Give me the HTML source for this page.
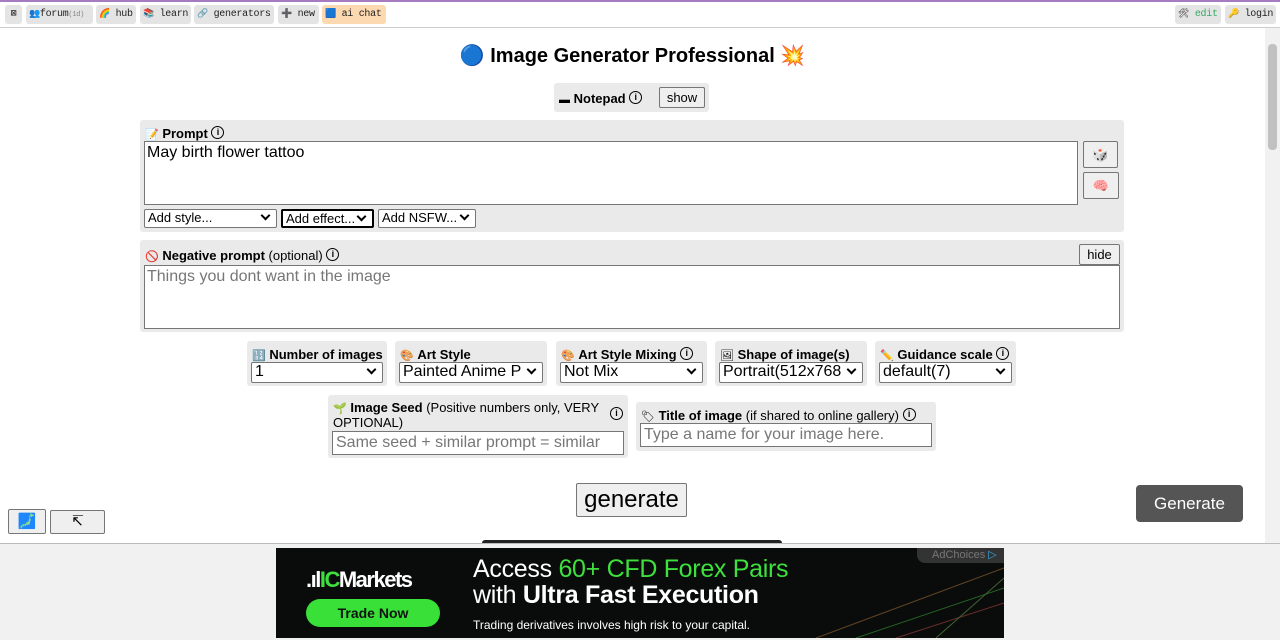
<!DOCTYPE html>
<html><head><meta charset="utf-8"><style>
*{box-sizing:border-box;margin:0;padding:0}
body{width:1280px;height:640px;overflow:hidden;background:#fff;font-family:"Liberation Sans",Arial,sans-serif;font-size:13px;color:#000;position:relative}
.a{position:absolute}
.top{left:0;top:0;width:1280px;height:28px;border-top:2px solid #a77bc0;border-bottom:1px solid #ccc;background:#fff}
.tb{position:absolute;top:3px;height:19px;background:#e4e4e4;border-radius:3px;font-family:"Liberation Mono",monospace;font-size:10px;line-height:19px;padding:0 3px;color:#222;white-space:nowrap;overflow:hidden;letter-spacing:-0.3px}
.tb i{font-style:normal;font-size:9px}
.box{position:absolute;background:#eaeaea;border-radius:3px}
b{font-weight:bold}
.sel{position:absolute;background:#fff;border:1px solid #767676;border-radius:2px;font-size:16px;line-height:18px;padding-left:3px;white-space:nowrap;overflow:hidden}
.sel:after{content:"";position:absolute;right:7px;top:3px;width:5px;height:5px;border-right:2px solid #000;border-bottom:2px solid #000;transform:rotate(45deg)}
.ssel{font-size:13px;line-height:16px}
.ssel:after{top:2px}
.lab{position:absolute;font-size:13px;white-space:nowrap;line-height:15px}
.btn{position:absolute;background:#efefef;border:1px solid #767676;border-radius:2px;text-align:center}
.i{display:inline-block;width:13px;height:13px;border:1.5px solid #000;border-radius:50%;font-size:9px;line-height:10px;text-align:center;font-weight:bold;vertical-align:text-top;font-style:normal}
.em{font-size:11px}
</style></head><body>
<div class="a top">
<div class="tb" style="left:5px;width:17px;padding:0;text-align:center">⊠</div>
<div class="tb" style="left:26px;width:67px"><i>👥</i>forum<span style="font-size:7px;color:#888">(1d)</span></div>
<div class="tb" style="left:96px;width:40px"><i>🌈</i> hub</div>
<div class="tb" style="left:140px;width:51px"><i>📚</i> learn</div>
<div class="tb" style="left:194px;width:80px"><i>🔗</i> generators</div>
<div class="tb" style="left:278px;width:41px"><i>➕</i> new</div>
<div class="tb" style="left:322px;width:64px;background:#fcd9b0"><i>🟦</i> ai chat</div>
<div class="tb" style="left:1175px;width:46px"><i>🛠</i> <span style="color:#3a6">edit</span></div>
<div class="tb" style="left:1225px;width:51px"><i>🔑</i> login</div>
</div>
<div class="a" style="left:1265px;top:28px;width:15px;height:515px;background:#f1f1f1"><div style="position:absolute;left:3px;top:16px;width:9px;height:106px;background:#c1c1c1;border-radius:4px"></div></div>
<div class="a" style="left:0;top:45px;width:1265px;text-align:center;font-size:20px;font-weight:bold;line-height:22px">🔵 Image Generator Professional 💥</div>

<div class="box" style="left:554px;top:83px;width:155px;height:29px"></div>
<div class="lab" style="left:559px;top:91px"><b><span class="em">▬</span> Notepad</b> <span class="i">i</span></div>
<div class="btn" style="left:659px;top:87px;width:46px;height:21px;line-height:19px;font-size:13px">show</div>

<div class="box" style="left:140px;top:120px;width:984px;height:112px"></div>
<div class="lab" style="left:145px;top:126px"><span class="em">📝</span> <b>Prompt</b> <span class="i">i</span></div>
<div class="a" style="left:144px;top:141px;width:934px;height:64px;background:#fff;border:1px solid #767676;font-size:16px;padding:2px 2px">May birth flower tattoo</div>
<div class="btn" style="left:1083px;top:141px;width:35px;height:27px;line-height:25px;font-size:13px">🎲</div>
<div class="btn" style="left:1083px;top:172px;width:36px;height:27px;line-height:25px;font-size:13px">🧠</div>
<div class="sel ssel" style="left:144px;top:209px;width:133px;height:19px">Add style...</div>
<div class="sel ssel" style="left:281px;top:209px;width:93px;height:19px;border:2px solid #000">Add effect...</div>
<div class="sel ssel" style="left:378px;top:209px;width:98px;height:19px">Add NSFW...</div>

<div class="box" style="left:140px;top:240px;width:984px;height:92px"></div>
<div class="lab" style="left:145px;top:248px"><span class="em">🚫</span> <b>Negative prompt</b> (optional) <span class="i">i</span></div>
<div class="btn" style="left:1079px;top:244px;width:41px;height:21px;line-height:19px">hide</div>
<div class="a" style="left:144px;top:265px;width:976px;height:64px;background:#fff;border:1px solid #767676;font-size:16px;padding:2px;color:#777">Things you dont want in the image</div>

<div class="box" style="left:247px;top:341px;width:140px;height:45px"></div>
<div class="lab" style="left:252px;top:347px"><span class="em">🔢</span> <b>Number of images</b></div>
<div class="sel" style="left:251px;top:362px;width:132px;height:21px">1</div>
<div class="box" style="left:395px;top:341px;width:152px;height:45px"></div>
<div class="lab" style="left:400px;top:347px"><span class="em">🎨</span> <b>Art Style</b></div>
<div class="sel" style="left:399px;top:362px;width:144px;height:21px">Painted Anime P</div>
<div class="box" style="left:556px;top:341px;width:151px;height:45px"></div>
<div class="lab" style="left:561px;top:347px"><span class="em">🎨</span> <b>Art Style Mixing</b> <span class="i">i</span></div>
<div class="sel" style="left:560px;top:362px;width:143px;height:21px">Not Mix</div>
<div class="box" style="left:715px;top:341px;width:152px;height:45px"></div>
<div class="lab" style="left:720px;top:347px"><span class="em">🖼</span> <b>Shape of image(s)</b></div>
<div class="sel" style="left:719px;top:362px;width:144px;height:21px">Portrait(512x768</div>
<div class="box" style="left:875px;top:341px;width:141px;height:45px"></div>
<div class="lab" style="left:880px;top:347px"><span class="em">✏️</span> <b>Guidance scale</b> <span class="i">i</span></div>
<div class="sel" style="left:879px;top:362px;width:133px;height:21px">default(7)</div>

<div class="box" style="left:328px;top:395px;width:300px;height:63px"></div>
<div class="lab" style="left:333px;top:401px;white-space:normal;width:270px;line-height:14px"><span class="em">🌱</span> <b>Image Seed</b> (Positive numbers only, VERY OPTIONAL)</div>
<div class="lab" style="left:610px;top:407px"><span class="i">i</span></div>
<div class="a" style="left:332px;top:431px;width:292px;height:24px;background:#fff;border:1px solid #767676;font-size:16px;padding:2px 3px;color:#777;white-space:nowrap;overflow:hidden">Same seed + similar prompt = similar</div>
<div class="box" style="left:636px;top:402px;width:300px;height:49px"></div>
<div class="lab" style="left:641px;top:408px"><span class="em">🏷</span> <b>Title of image</b> (if shared to online gallery) <span class="i">i</span></div>
<div class="a" style="left:640px;top:423px;width:292px;height:24px;background:#fff;border:1px solid #767676;font-size:16px;padding:2px 3px;color:#777">Type a name for your image here.</div>

<div class="btn" style="left:576px;top:483px;width:111px;height:34px;font-size:24px;line-height:32px">generate</div>
<div class="a" style="left:1136px;top:485px;width:107px;height:37px;background:#555;color:#fff;border-radius:4px;font-size:17px;line-height:37px;text-align:center">Generate</div>
<div class="btn" style="left:8px;top:509px;width:38px;height:25px;line-height:23px;font-size:15px">🗾</div>
<div class="btn" style="left:50px;top:510px;width:55px;height:24px;line-height:22px;font-size:15px">↸</div>
<div class="a" style="left:482px;top:540px;width:300px;height:4px;background:#222;border-radius:3px 3px 0 0"></div>

<div class="a" style="left:0;top:543px;width:1280px;height:97px;background:#f1f1f1;border-top:1px solid #bbb"></div>
<div class="a" style="left:276px;top:548px;width:728px;height:90px;background:#0a0c0b;overflow:hidden">
<svg class="a" style="left:0;top:0" width="728" height="90"><g stroke-width="1" opacity=".45"><line x1="540" y1="90" x2="728" y2="20" stroke="#c84"/><line x1="580" y1="90" x2="728" y2="40" stroke="#4c4"/><line x1="620" y1="90" x2="728" y2="55" stroke="#d55"/><line x1="660" y1="90" x2="728" y2="30" stroke="#8c6"/></g></svg>
<div class="a" style="left:30px;top:19px;color:#fff;font-weight:bold;font-size:22px;letter-spacing:-1.5px">.ıl<span style="color:#3ee03e">IC</span>Markets</div>
<div class="a" style="left:30px;top:51px;width:134px;height:28px;background:#38e038;border-radius:14px;text-align:center;line-height:28px;font-size:14px;font-weight:bold;color:#111">Trade Now</div>
<div class="a" style="left:197px;top:8px;color:#fff;font-size:25px;line-height:26px;white-space:nowrap;letter-spacing:-0.3px">Access <span style="color:#3ee03e">60+ CFD Forex Pairs</span><br>with <b>Ultra Fast Execution</b></div>
<div class="a" style="left:197px;top:70px;color:#fff;font-size:12px">Trading derivatives involves high risk to your capital.</div>
<div class="a" style="left:641px;top:0;width:87px;height:15px;background:#333;border-radius:0 0 0 8px;color:#777;font-size:11px;line-height:15px;padding-left:15px">AdChoices <span style="color:#3ad">▷</span></div>
</div>
</body></html>
